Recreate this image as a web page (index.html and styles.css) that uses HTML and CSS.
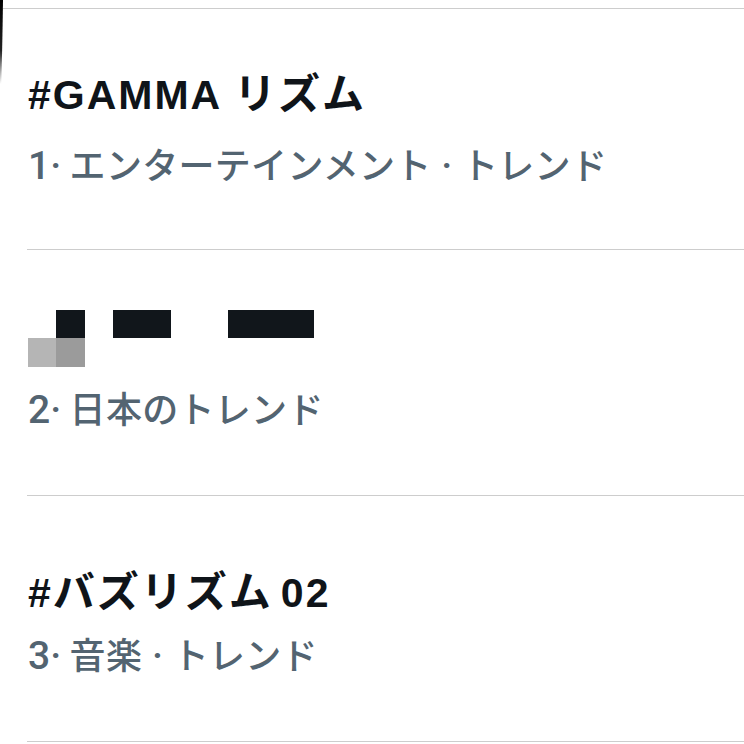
FILE: index.html
```html
<!DOCTYPE html>
<html lang="ja">
<head>
<meta charset="utf-8">
<link rel="stylesheet" href="styles.css">
</head>
<body>
<div class="screen">
  <svg class="bezel" width="8" height="90" viewBox="0 0 8 90">
    <defs>
      <linearGradient id="bz" x1="0" y1="0" x2="0" y2="1">
        <stop offset="0" stop-color="#000"/>
        <stop offset="0.6" stop-color="#222"/>
        <stop offset="1" stop-color="#fff"/>
      </linearGradient>
    </defs>
    <path d="M0 0 H3 C 2.6 30, 2 60, 1.2 84 L0 84 Z" fill="url(#bz)"/>
  </svg>
  <div class="topline"></div>
  <div class="trend first">
    <div class="title">#GAMMA <span class="ja">リズム</span></div>
    <div class="meta">1·<span class="ja"> エンターテインメント</span> · <span class="ja">トレンド</span></div>
  </div>
  <div class="trend">
    <div class="title redacted">
      <div class="blk">
        <span class="px"></span><span class="px dark"></span>
        <span class="px light"></span><span class="px mid"></span>
      </div>
      <span class="bar b1"></span>
      <span class="bar b2"></span>
    </div>
    <div class="meta">2·<span class="ja"> 日本のトレンド</span></div>
  </div>
  <div class="trend">
    <div class="title">#<span class="ja tail">バズリズム</span>02</div>
    <div class="meta">3·<span class="ja"> 音楽</span> · <span class="ja">トレンド</span></div>
  </div>
</div>
</body>
</html>
```
FILE: styles.css
```css
html, body {
  margin: 0;
  padding: 0;
  background: #fff;
}
.screen {
  position: relative;
  width: 744px;
  height: 744px;
  overflow: hidden;
  padding-top: 8px;
  box-sizing: border-box;
}
.bezel {
  position: absolute;
  left: 0;
  top: 0;
}
.topline {
  height: 1px;
  background: #cdcdcd;
  margin-left: 3px;
}
.trend {
  margin-left: 27px;
  padding-left: 1px;
  height: 173px;
  padding-top: 72px;
  border-bottom: 1px solid #cdcdcd;
  display: flex;
  flex-direction: column;
  gap: 22px;
}
.trend.first {
  padding-top: 61px;
  height: 179px;
  gap: 30px;
}
.title {
  font-family: "Liberation Sans", "Noto Sans CJK JP", sans-serif;
  font-weight: 700;
  font-size: 41px;
  letter-spacing: 2px;
  line-height: 44px;
  height: 44px;
  color: #0f1419;
  white-space: nowrap;
}
.title .ja {
  font-family: "Noto Sans CJK JP", sans-serif;
  font-size: 42px;
  line-height: 1;
  letter-spacing: 2px;
}
.title .ja.tail {
  margin-right: 8px;
}
.meta {
  font-family: Roboto, "Liberation Sans", "Noto Sans CJK JP", sans-serif;
  font-weight: 500;
  font-size: 39px;
  line-height: 44px;
  height: 44px;
  color: #536471;
  white-space: nowrap;
}
.meta .ja {
  font-family: "Noto Sans CJK JP", sans-serif;
  font-weight: 500;
  font-size: 36px;
  line-height: 1;
  letter-spacing: 0.3px;
}
.redacted {
  display: flex;
  align-items: flex-start;
}
.blk {
  display: grid;
  grid-template-columns: 28px 29px;
  grid-template-rows: 28px 29px;
  margin-top: -12px;
}
.px { display: block; }
.px.dark { background: #11161b; }
.px.light { background: #b5b5b5; }
.px.mid { background: #9b9b9b; }
.bar {
  display: block;
  height: 28px;
  margin-top: -12px;
  background: #11161b;
}
.b1 { width: 58px; margin-left: 28px; }
.b2 { width: 86px; margin-left: 57px; }
```
